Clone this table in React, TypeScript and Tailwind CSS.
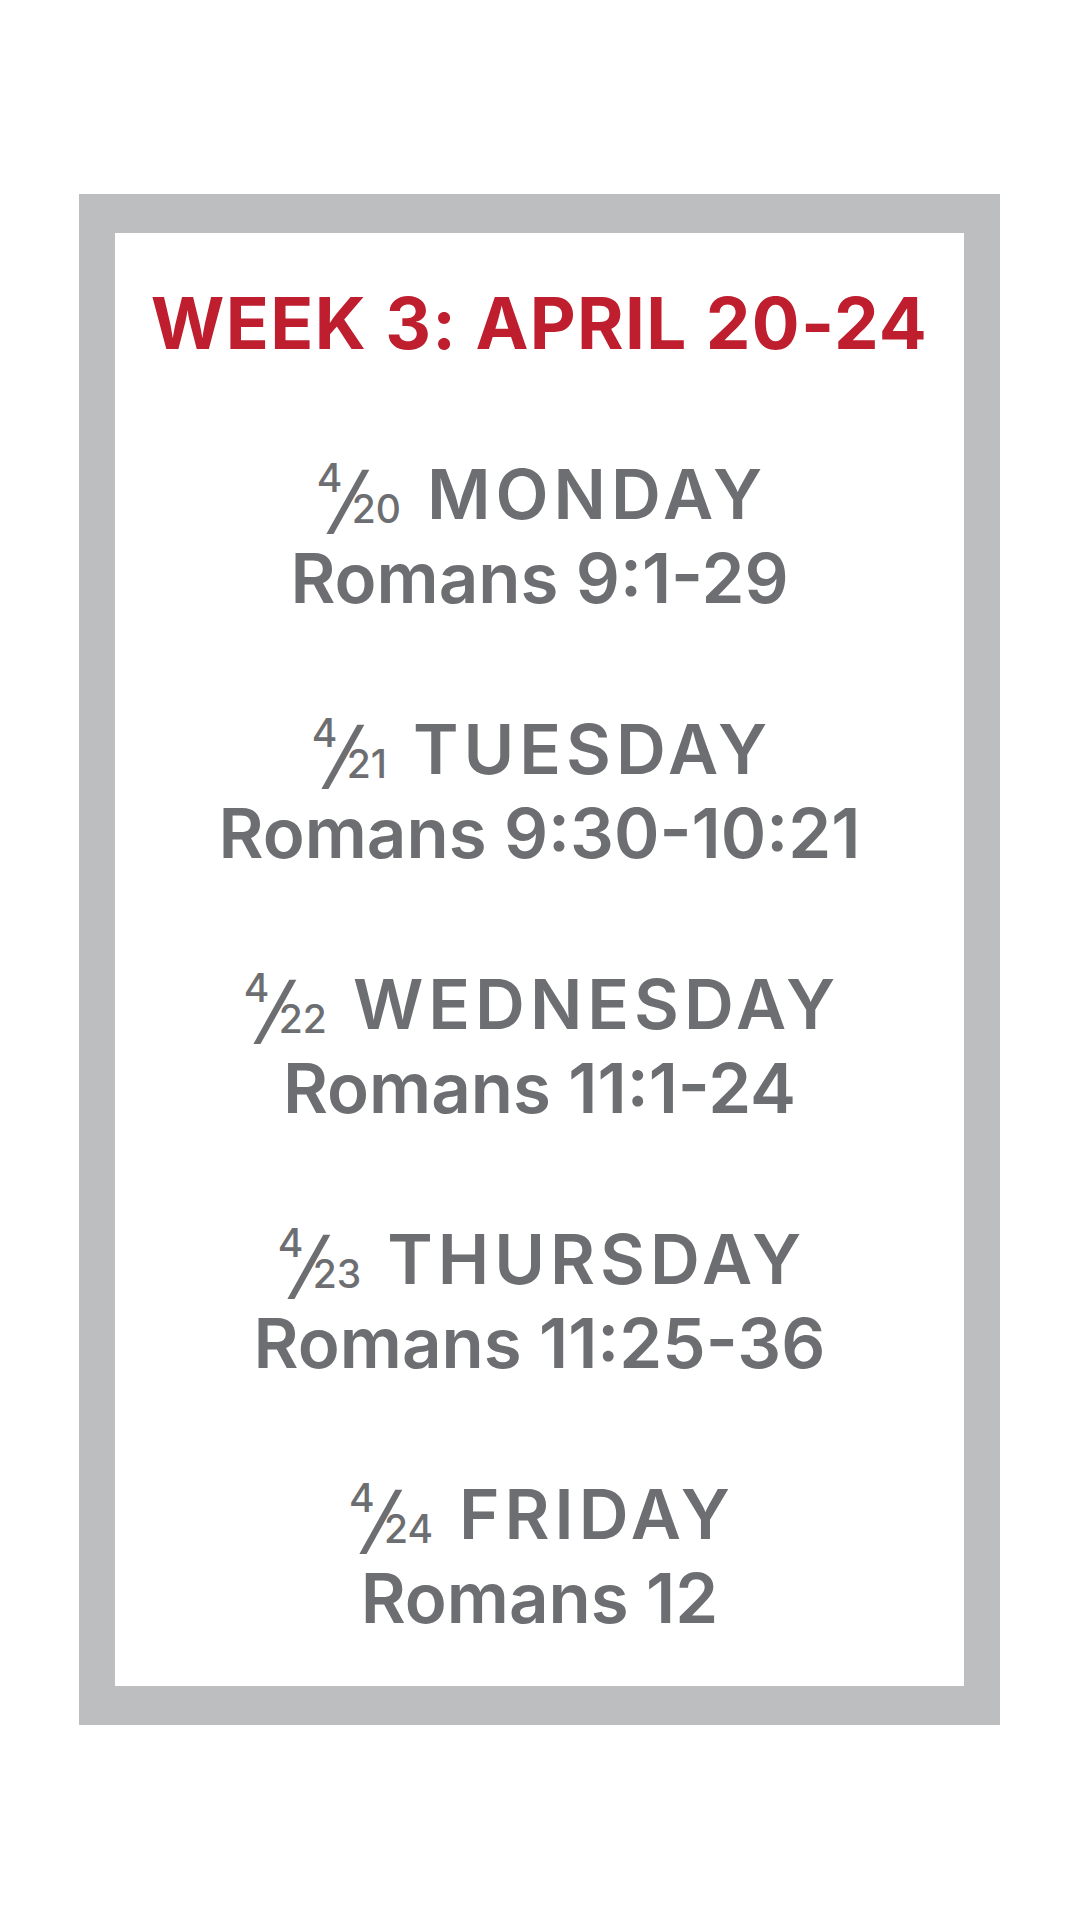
import React from 'react';

const days = [
  { d: '20', name: 'MONDAY', reading: 'Romans 9:1-29' },
  { d: '21', name: 'TUESDAY', reading: 'Romans 9:30-10:21' },
  { d: '22', name: 'WEDNESDAY', reading: 'Romans 11:1-24' },
  { d: '23', name: 'THURSDAY', reading: 'Romans 11:25-36' },
  { d: '24', name: 'FRIDAY', reading: 'Romans 12' },
];

const App: React.FC = () => {
  return (
    <div className="w-[1080px] h-[1920px] bg-white pt-[194px] pl-[79px] font-['Inter','Liberation_Sans',sans-serif]">
      <div className="w-[921px] h-[1531px] bg-white border-x-[36px] border-y-[39px] border-[#bcbec0] flex flex-col items-center pt-[48px]">
        {/* titulo */}
        <h1 className="text-[#be1e2d] font-bold text-[71px] leading-[84px] tracking-[1.3px] whitespace-nowrap">
          WEEK 3: APRIL 20-24
        </h1>

        <div className="flex flex-col items-center gap-[87px] mt-[87px] text-[#6d6e71]">
          {days.map((day) => (
            <div key={day.d} className="flex flex-col items-center">
              <div className="flex items-baseline font-semibold text-[69px] leading-[84px] whitespace-nowrap">
                <span className="flex items-baseline mr-[26px] leading-none font-medium">
                  <span className="text-[39px] relative -top-[27px]">4</span>
                  <span className="inline-block text-[74px] font-medium relative top-[7px] -ml-[7px] -mr-[11px] -skew-x-[16deg]">/</span>
                  <span className="text-[39px] relative top-[4px]">{day.d}</span>
                </span>
                <span className="tracking-[5px] -mr-[5px]">{day.name}</span>
              </div>
              <div className="font-semibold text-[69px] leading-[84px] whitespace-nowrap">{day.reading}</div>
            </div>
          ))}
        </div>
      </div>
    </div>
  );
};

export default App;
